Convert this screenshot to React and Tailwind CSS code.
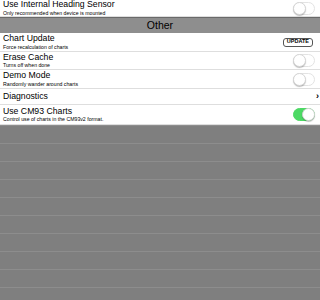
import React from 'react';

const Toggle = ({ on }) => (
  <div
    className={`relative w-[22px] h-[13px] rounded-full border ${
      on ? 'bg-[#4cd964] border-[#4cd964]' : 'bg-white border-[#e3e3e3]'
    }`}
  >
    <div
      className={`absolute top-[-1px] w-[13px] h-[13px] rounded-full bg-white border border-[#d6d6d6] shadow-[0_1px_1px_rgba(0,0,0,0.25)] ${
        on ? 'right-[-1px]' : 'left-[-1px]'
      }`}
    />
  </div>
);

const Row = ({ title, subtitle, right, h }) => (
  <div className={`flex items-center justify-between pl-[3px] pr-[5px] border-b border-[#dedede] bg-white ${h}`}>
    <div className="flex flex-col leading-none">
      <span className="text-[8.7px] text-black">{title}</span>
      {subtitle && <span className="text-[5.2px] text-black mt-[2px]">{subtitle}</span>}
    </div>
    {right}
  </div>
);

const settings = [
  { title: 'Chart Update', subtitle: 'Force recalculation of charts', h: 'h-[19px]', right: (
    <button className="px-[3px] h-[9px] rounded-[3px] border border-[#555] text-[5.5px] font-semibold leading-none text-black mr-[2px]">
      UPDATE
    </button>
  ) },
  { title: 'Erase Cache', subtitle: 'Turns off when done', h: 'h-[18px]', right: <Toggle /> },
  { title: 'Demo Mode', subtitle: 'Randomly wander around charts', h: 'h-[19px]', right: <Toggle /> },
  { title: 'Diagnostics', h: 'h-[16px]', right: <span className="text-[9px] font-bold leading-none mr-[-4px]">›</span> },
  { title: 'Use CM93 Charts', subtitle: 'Control use of charts in the CM93v2 format.', h: 'h-[20px]', right: <Toggle on /> },
];

export default function App() {
  return (
    <div className="w-[320px] h-[300px] overflow-hidden bg-[#7f7f7f] font-['Liberation_Sans',Arial,sans-serif]">
      <Row title="Use Internal Heading Sensor" subtitle="Only recommended when device is mounted" h="h-[17px]" right={<Toggle />} />
      <div className="h-[16px] flex items-center justify-center bg-[#8e8e8e] border-t border-[#6a6a6a] text-[10.5px] text-black">
        Other
      </div>
      {settings.map((s) => (
        <Row key={s.title} {...s} />
      ))}
      <div className="flex flex-col">
        {Array.from({ length: 10 }).map((_, i) => (
          <div key={i} className="h-[18px] border-t border-[#8d8d8d] shrink-0" />
        ))}
      </div>
    </div>
  );
}
